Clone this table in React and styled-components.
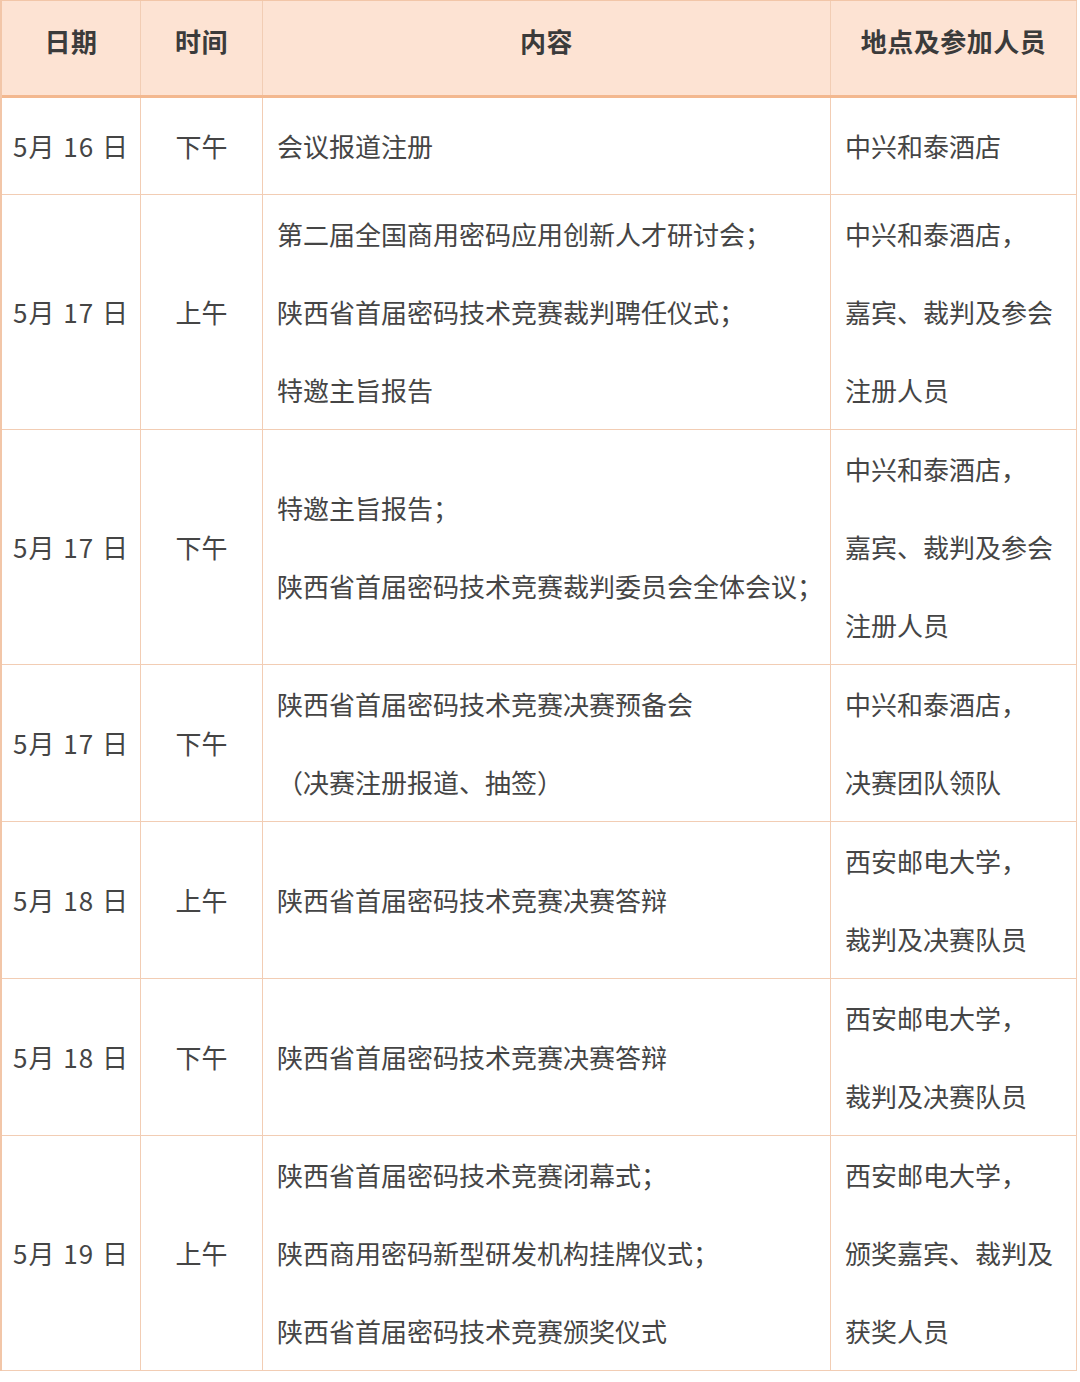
import React from 'react';
import styled, { createGlobalStyle } from 'styled-components';

const GlobalStyle = createGlobalStyle`
  html, body {
    margin: 0;
    padding: 0;
    background: #ffffff;
  }
  body {
    font-family: "Noto Sans CJK SC", "Noto Sans", sans-serif;
    color: #3e3e3e;
  }
`;

const Table = styled.div`
  width: 1077px;
  border-left: 2px solid #f2c6a8;
  border-top: 1px solid #f2c6a8;
  box-sizing: border-box;
`;

const Row = styled.div`
  display: grid;
  grid-template-columns: 139px 122px 568px 246px;
  min-height: ${props => (props.header ? 94 : 96)}px;
  border-bottom: ${props => (props.header ? '3px solid #f3b88f' : '1px solid #f2cdb4')};
  background: ${props => (props.header ? '#fde3d3' : '#ffffff')};
`;

const Cell = styled.div`
  display: flex;
  flex-direction: column;
  justify-content: center;
  align-items: ${props => (props.left ? 'flex-start' : 'center')};
  padding: 0 ${props => (props.left ? '14px' : '0')};
  padding-bottom: ${props => (props.bold ? '14px' : '0')};
  border-right: 1px solid #f2cdb4;
  font-size: 26px;
  line-height: 78px;
  white-space: nowrap;
  font-weight: ${props => (props.bold ? 700 : 400)};
  color: ${props => (props.bold ? '#3b3b3b' : '#454545')};
  letter-spacing: ${props => (props.bold ? '0.5px' : '0')};
`;

const Line = styled.span`
  display: block;
`;

const DateText = styled.span`
  word-spacing: 1px;
  letter-spacing: 1px;
`;

const rows = [
  { date: '16', time: '下午', content: ['会议报道注册'], place: ['中兴和泰酒店'] },
  {
    date: '17',
    time: '上午',
    content: ['第二届全国商用密码应用创新人才研讨会；', '陕西省首届密码技术竞赛裁判聘任仪式；', '特邀主旨报告'],
    place: ['中兴和泰酒店，', '嘉宾、裁判及参会', '注册人员'],
  },
  {
    date: '17',
    time: '下午',
    content: ['特邀主旨报告；', '陕西省首届密码技术竞赛裁判委员会全体会议；'],
    place: ['中兴和泰酒店，', '嘉宾、裁判及参会', '注册人员'],
  },
  {
    date: '17',
    time: '下午',
    content: ['陕西省首届密码技术竞赛决赛预备会', '（决赛注册报道、抽签）'],
    place: ['中兴和泰酒店，', '决赛团队领队'],
  },
  {
    date: '18',
    time: '上午',
    content: ['陕西省首届密码技术竞赛决赛答辩'],
    place: ['西安邮电大学，', '裁判及决赛队员'],
  },
  {
    date: '18',
    time: '下午',
    content: ['陕西省首届密码技术竞赛决赛答辩'],
    place: ['西安邮电大学，', '裁判及决赛队员'],
  },
  {
    date: '19',
    time: '上午',
    content: ['陕西省首届密码技术竞赛闭幕式；', '陕西商用密码新型研发机构挂牌仪式；', '陕西省首届密码技术竞赛颁奖仪式'],
    place: ['西安邮电大学，', '颁奖嘉宾、裁判及', '获奖人员'],
  },
];

const App = () => (
  <>
    <GlobalStyle />
    <Table>
      <Row header>
        <Cell bold>日期</Cell>
        <Cell bold>时间</Cell>
        <Cell bold>内容</Cell>
        <Cell bold>地点及参加人员</Cell>
      </Row>
      {rows.map((r, i) => (
        <Row key={i}>
          <Cell>
            <DateText>5月 {r.date} 日</DateText>
          </Cell>
          <Cell>{r.time}</Cell>
          <Cell left>
            {r.content.map(line => (
              <Line key={line}>{line}</Line>
            ))}
          </Cell>
          <Cell left>
            {r.place.map(line => (
              <Line key={line}>{line}</Line>
            ))}
          </Cell>
        </Row>
      ))}
    </Table>
  </>
);

export default App;
